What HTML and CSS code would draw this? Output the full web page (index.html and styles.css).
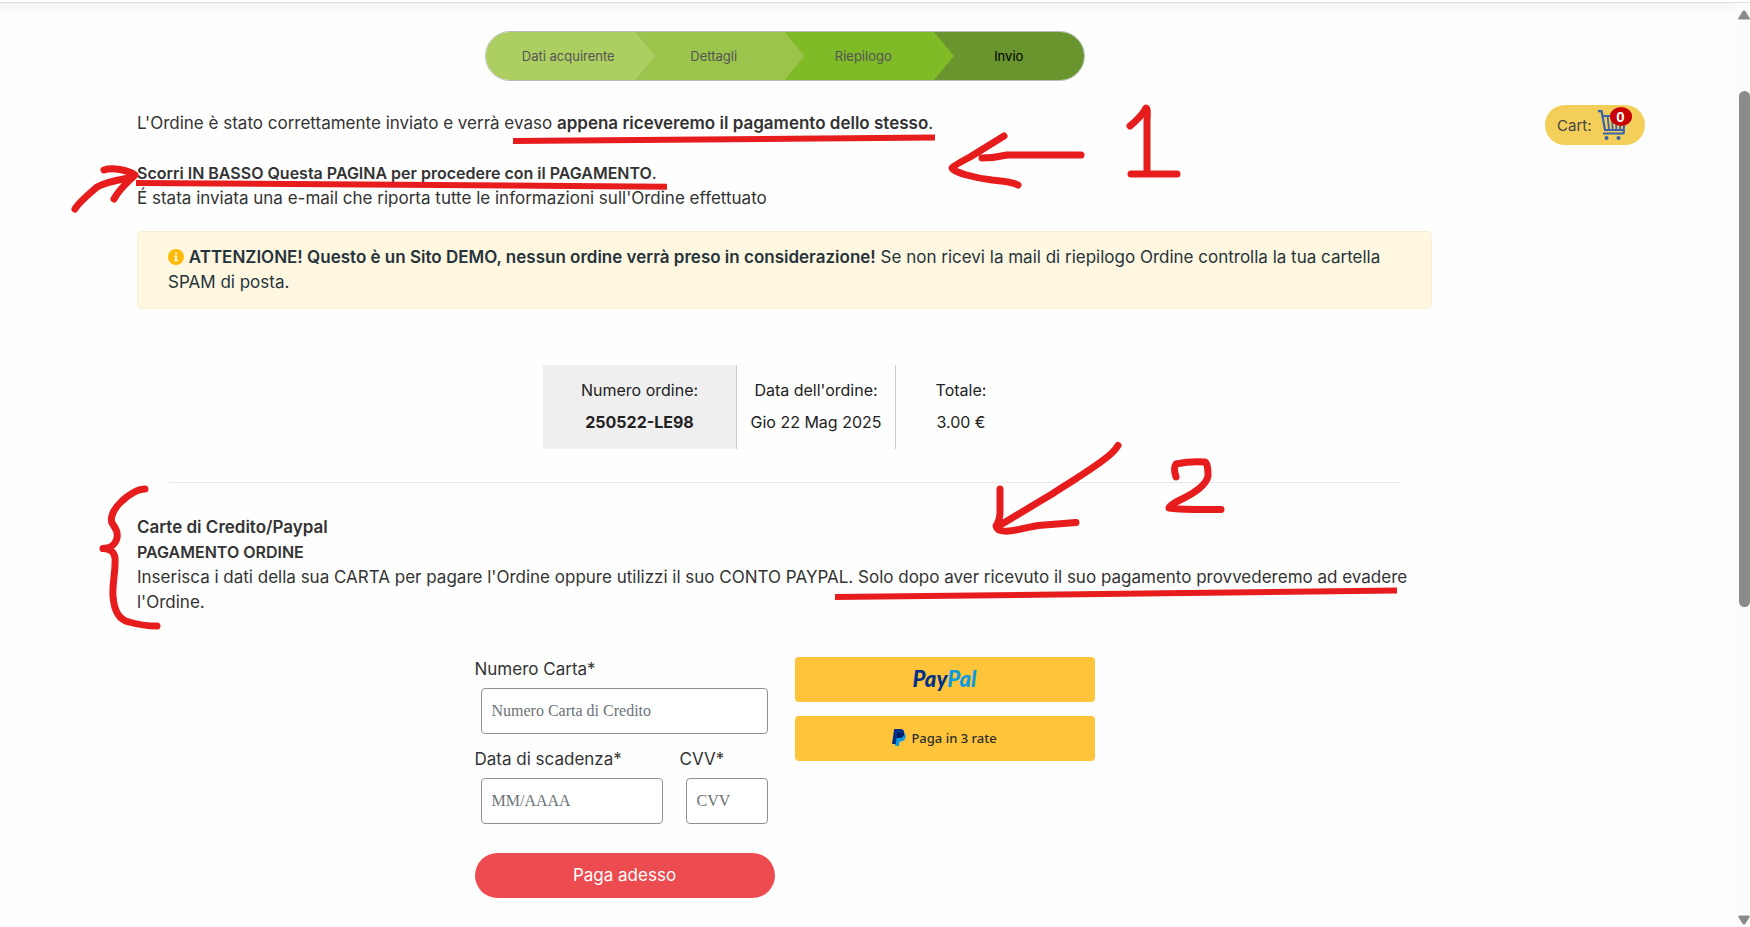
FILE: index.html
```html
<!DOCTYPE html>
<html lang="it">
<head>
<meta charset="utf-8">
<meta name="viewport" content="width=device-width, initial-scale=1">
<title>Invio ordine</title>
<link rel="stylesheet" href="styles.css">
</head>
<body>
<div class="viewport">
  <div class="page">
    <main class="content">
      <ol class="steps">
        <li class="step step-1">Dati acquirente</li>
        <li class="step step-2">Dettagli</li>
        <li class="step step-3">Riepilogo</li>
        <li class="step step-4" aria-current="step">Invio</li>
      </ol>

      <div class="message">
        <p>L'Ordine è stato correttamente inviato e verrà evaso <strong>appena riceveremo il pagamento dello stesso</strong>.</p>
        <p class="spaced"><strong class="caps">Scorri IN BASSO Questa PAGINA per procedere con il PAGAMENTO</strong>.</p>
        <p>É stata inviata una e-mail che riporta tutte le informazioni sull'Ordine effettuato</p>
      </div>

      <div class="alert" role="alert">
        <svg class="info" viewBox="0 0 16 16" aria-hidden="true"><circle cx="8" cy="8" r="8" fill="#ffb908"/><path d="M7 3.4h2v1.9H7zM6.2 6.5H9v4.2h.9v1.6H6.2v-1.6h.9V8.1h-.9z" fill="#fff6dc"/></svg>
        <strong>ATTENZIONE! Questo è un Sito DEMO, nessun ordine verrà preso in considerazione!</strong> Se non ricevi la mail di riepilogo Ordine controlla la tua cartella SPAM di posta.
      </div>

      <dl class="order">
        <div class="order-cell order-number"><dt>Numero ordine:</dt><dd>250522-LE98</dd></div>
        <div class="order-cell order-date"><dt>Data dell'ordine:</dt><dd>Gio 22 Mag 2025</dd></div>
        <div class="order-cell order-total"><dt>Totale:</dt><dd>3.00 €</dd></div>
      </dl>

      <hr class="rule">

      <section class="message">
        <p><strong>Carte di Credito/Paypal</strong></p>
        <p><strong class="caps">PAGAMENTO ORDINE</strong></p>
        <p>Inserisca i dati della sua CARTA per pagare l'Ordine oppure utilizzi il suo CONTO PAYPAL. Solo dopo aver ricevuto il suo pagamento provvederemo ad evadere l'Ordine.</p>
      </section>

      <div class="payment">
        <form class="card-form">
          <div class="field">
            <label for="card">Numero Carta*</label>
            <input id="card" type="text" placeholder="Numero Carta di Credito">
          </div>
          <div class="field-row">
            <div class="field field-date">
              <label for="expiry">Data di scadenza*</label>
              <input id="expiry" type="text" placeholder="MM/AAAA">
            </div>
            <div class="field field-cvv">
              <label for="cvv">CVV*</label>
              <input id="cvv" type="text" placeholder="CVV">
            </div>
          </div>
          <button class="pay" type="button">Paga adesso</button>
        </form>
        <div class="wallets">
          <button class="wallet" type="button"><span class="brand">Pay<span class="brand-light">Pal</span></span></button>
          <button class="wallet" type="button">
            <svg class="mark" viewBox="0 0 14 17" aria-hidden="true"><path d="M4.6 4H11c2.300.3 3.200 2 2.600 4.500-.6 2.800-2.400 4-5.100 4H7.500L6.800 17H3z" fill="#0c9be0"/><path d="M2.200 0H8c3.200 0 4.700 1.800 4.100 4.700-.6 3-2.600 4.300-5.600 4.300H4.600l-.9 6H0z" fill="#003087"/><path d="M5.400 4.200h6.800C11.900 7.500 9.900 9 6.500 9H4.600z" fill="#001c64"/></svg>
            <span>Paga in 3 rate</span>
          </button>
        </div>
      </div>
    </main>

    <aside class="side">
      <a class="cart" href="#cart" aria-label="Cart: 0">
        <span>Cart:</span>
        <span class="cart-icon">
          <svg viewBox="0 0 28 30" aria-hidden="true"><g fill="none" stroke="#3b62ad" stroke-width="2.200"><path d="M0 1.200h3.600L7 20h18.500L27.500 6H5M5 23.500h20.500l.6-4"/><path d="M9.500 6l1.500 13M14 6l.6 13M18.300 6v13M22.800 6l-.9 13" stroke-width="1.800"/></g><circle cx="8.500" cy="28" r="2" fill="#3b62ad"/><circle cx="20.500" cy="28" r="2" fill="#3b62ad"/></svg>
          <span class="badge">0</span>
        </span>
      </a>
    </aside>
  </div>

  <div class="scrollbar" aria-hidden="true">
    <svg class="arrow" viewBox="0 0 12 10"><path d="M6 0.500Q7 .5 7.600 1.400L11.700 8Q12 9.500 10.800 9.500H1.200Q0 9.500.4 8L4.400 1.400Q5 .5 6 .5z" fill="#8b8b8b"/></svg>
    <div class="track"><div class="thumb"></div></div>
    <svg class="arrow arrow-down" viewBox="0 0 12 10"><path d="M6 0.500Q7 .5 7.600 1.400L11.700 8Q12 9.500 10.800 9.500H1.200Q0 9.500.4 8L4.400 1.400Q5 .5 6 .5z" fill="#8b8b8b"/></svg>
  </div>
</div>

<svg class="ink" viewBox="0 0 1750 927" aria-hidden="true">
  <g class="ink-lines">
    <path d="M513 141L935 137.500"/>
    <path d="M136 183L667 186.700"/>
    <path d="M835 597L1397 590.500"/>
  </g>
  <g class="ink-pen">
    <path d="M75 209C78 203 90 193 97 187C106 182 118 180 129 178M104 170C112 167 128 170 135 175C128 182 120 188 114 199"/>
    <path d="M1004 136L970 157Q953 166 952 168C952 172 975 178 992 180Q1013 182 1018 185M1081 155H1007Q994 158 982 158"/>
    <path d="M1130 126Q1142 116 1146 108Q1148 108 1147 120V170M1131 174H1177"/>
    <path d="M145 489C138 489 128 495 122 501C113 509 110 518 112 523C116 529 118 532 117 538C115 546 110 548 103 548.600C110 549 114 551 115 558C116 572 112 582 113 596C114 610 119 620 129 622Q143 626 157 626"/>
    <path d="M1118 445.500Q1114 452 1106 458C1088 472 1070 482 1052 494Q1022 512 997 527M1000 489V512Q1000 520 996 526Q997 532 1009 531C1020 530 1028 527 1038 525.500L1076 522.500"/>
    <path d="M1176 477Q1173 468 1176 464Q1190 461 1204 462Q1208 461 1208 476C1206 486 1194 493 1184 498Q1169 505 1169 508Q1184 510 1221 509.500"/>
  </g>
</svg>
</body>
</html>
```
FILE: styles.css
```css
* { box-sizing: border-box; }

body {
  margin: 0;
  background: #fff;
  color: #333;
  font-family: Inter, "Open Sans", sans-serif;
  font-size: 17px;
  line-height: 25px;
}

p, dl, dd, ol { margin: 0; padding: 0; }

strong {
  font-weight: 600;
  line-height: 1;
}

.caps { font-size: 16px; }

.viewport {
  display: flex;
  height: 100vh;
  overflow: hidden;
}

.page {
  flex: 1;
  display: flex;
  min-width: 0;
  margin-top: 2px;
  padding-left: 137px;
  border-top: 1px solid #dedede;
  background: linear-gradient(#f5f5f5, #fefefe 12px);
}

.content {
  flex: 1;
  min-width: 0;
  padding-top: 28px;
}

.side {
  width: 303px;
  padding: 102px 90px 0 113px;
}

.steps {
  display: grid;
  grid-template-columns: repeat(4, 1fr);
  width: 600px;
  height: 50px;
  margin: 0 auto 30px;
  border: 1px solid #bbb;
  border-radius: 25px;
  overflow: hidden;
  list-style: none;
  font-size: 13px;
  color: #555;
}

.step {
  display: flex;
  align-items: center;
  justify-content: center;
  margin-right: -20px;
  padding-right: 12px;
  clip-path: polygon(0 0, calc(100% - 20px) 0, 100% 50%, calc(100% - 20px) 100%, 0 100%);
  position: relative;
}

.step-1 { background: #adce60; z-index: 4; padding-right: 4px; }
.step-2 { background: #9ac44b; z-index: 3; }
.step-3 { background: #7fba27; z-index: 2; }
.step-4 { background: #69942e; z-index: 1; margin-right: 0; padding-right: 0; color: #000; clip-path: none; }

.spaced { margin-top: 25px; }

.alert {
  margin-top: 20px;
  padding: 13px 30px;
  border: 1px solid #f9efd6;
  border-radius: 5px;
  background: #fff7e0;
  color: #26333b;
}

.info {
  width: 16px;
  height: 16px;
  vertical-align: -2px;
}

.order {
  display: flex;
  justify-content: center;
  margin-top: 56px;
  color: #222;
  font-size: 16px;
  text-align: center;
  line-height: 32px;
}

.order-cell { padding: 9px 0 11px; }
.order-number { width: 194px; background: #efefef; border-right: 1px solid #ccc; }
.order-number dd { font-weight: 700; }
.order-date { width: 159px; border-right: 1px solid #ccc; }
.order-total { width: 130px; }

.rule {
  margin: 33px 32px 32px;
  border: 0;
  border-top: 1px solid #e8e8e8;
}

.payment {
  display: flex;
  justify-content: center;
  gap: 20px;
  margin-top: 42px;
}

.card-form, .wallets { width: 300px; }

.field label { display: block; }

.field input {
  display: block;
  width: calc(100% - 13px);
  height: 46px;
  margin: 6px 6px 0;
  padding: 0 10px;
  border: 1px solid #8f9294;
  border-radius: 4px;
  background: #fff;
  font-family: "Liberation Serif", serif;
  font-size: 16px;
}

.field input::placeholder { color: #6c7378; opacity: 1; }

.field-row {
  display: flex;
  gap: 10px;
  margin-top: 13px;
}

.field-date { width: 195px; }
.field-cvv { width: 95px; }

.pay {
  width: 100%;
  height: 45px;
  margin-top: 29px;
  border: 0;
  border-radius: 23px;
  background: #ec4b50;
  color: #fff;
  font: inherit;
}

.wallets {
  display: flex;
  flex-direction: column;
  gap: 14px;
}

.wallet {
  display: flex;
  align-items: center;
  justify-content: center;
  gap: 5px;
  height: 45px;
  padding: 0 0 2px;
  border: 0;
  border-radius: 4px;
  background: #ffc439;
  color: #2c2e2f;
  font: 500 13px "Noto Sans", sans-serif;
}

.brand {
  color: #003087;
  font: italic 900 22px Lato, sans-serif;
}

.brand-light { color: #0c9be0; }

.mark { width: 14px; height: 17px; }

.cart {
  display: flex;
  align-items: center;
  gap: 6px;
  width: 100px;
  height: 40px;
  padding-left: 12px;
  border-radius: 20px;
  background: #f3cf5a;
  color: #444;
  font-size: 15px;
  text-decoration: none;
}

.cart-icon {
  position: relative;
  width: 28px;
  height: 30px;
}

.cart-icon svg { display: block; width: 28px; height: 30px; }

.badge {
  position: absolute;
  top: -3px;
  right: -6px;
  width: 22px;
  height: 19px;
  border-radius: 50%;
  background: #c90000;
  color: #fff;
  font: 700 15px/19px "Liberation Sans", sans-serif;
  text-align: center;
}

.scrollbar {
  display: flex;
  flex-direction: column;
  align-items: flex-end;
  width: 15px;
  margin-top: 2px;
  padding: 7px 0 2px;
  border-top: 1px solid #dedede;
  background: #fcfcfc;
}

.arrow { width: 12px; height: 10px; }
.arrow-down { transform: rotate(180deg); }

.track {
  flex: 1;
  width: 11px;
  padding-top: 71px;
}

.thumb {
  height: 516px;
  border-radius: 6px;
  background: #8b8b8b;
}

.ink {
  position: absolute;
  top: 0;
  left: 0;
  width: 100%;
  pointer-events: none;
}

.ink-lines path, .ink-pen path {
  fill: none;
  stroke: #e71d1d;
}

.ink-lines path { stroke-width: 6px; }

.ink-pen path {
  stroke-width: 7px;
  stroke-linecap: round;
  stroke-linejoin: round;
}
```
